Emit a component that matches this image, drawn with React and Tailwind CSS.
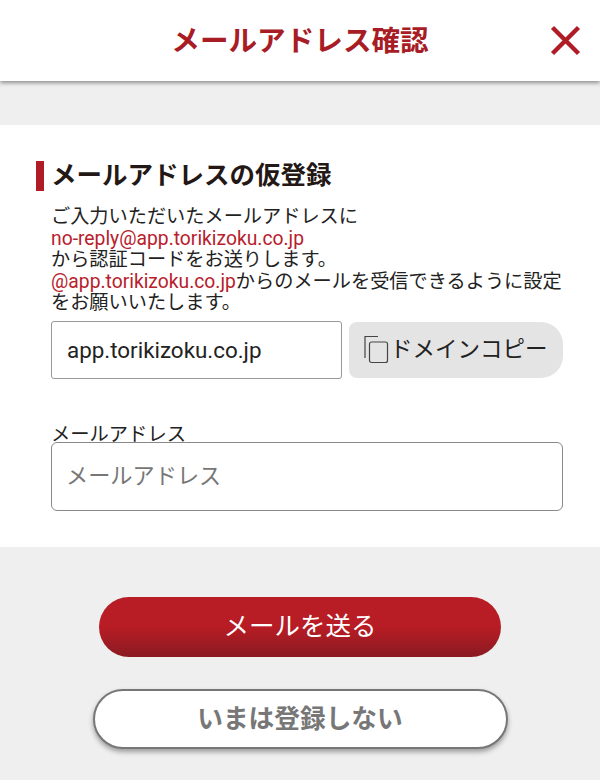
const JP = "font-['Roboto','Noto_Sans_CJK_JP',sans-serif]";

const CopyIcon = () => (
  <svg width="26" height="30" viewBox="0 0 26 30" fill="none" stroke="#444" strokeWidth="1.2" className="shrink-0">
    <path d="M1 23V1.5H14" />
    <rect x="5.5" y="7" width="18" height="20.5" rx="2" />
  </svg>
);

export default function App() {
  return (
    <div className={`${JP} w-[600px] h-[780px] overflow-hidden bg-[#efefef] flex flex-col`}>
      <header className="relative h-[81px] shrink-0 bg-white shadow-[0_2px_4px_rgba(0,0,0,0.4)] flex items-center justify-center">
        <h1 className="pt-[2px] text-[28.6px] leading-none font-bold text-[#a81c25]">メールアドレス確認</h1>
        <button className="absolute left-[549px] top-[24px]">
          <svg width="33" height="33" viewBox="0 0 33 33" fill="none" stroke="#b01c26" strokeWidth="4.4" className="block">
            <path d="M3.5 3.5L29.5 29.5M29.5 3.5L3.5 29.5" />
          </svg>
        </button>
      </header>

      <main className="mt-[44px] h-[422px] shrink-0 bg-white pt-[36px] pl-[36px] pr-[37px]">
        <h2 className="flex items-center h-[30px] text-[25.5px] leading-none font-bold text-[#231815]">
          <span className="w-[8px] h-[30px] bg-[#b01c26] mr-[7px]"></span>
          メールアドレスの仮登録
        </h2>
        <div className="pl-[15px]">
          <p className="mt-[15px] text-[19.2px] leading-[21.5px] text-[#222]">
            ご入力いただいたメールアドレスに<br />
            <span className="text-[#b8202c] text-[19.3px] leading-none">no-reply@app.torikizoku.co.jp</span><br />
            から認証コードをお送りします。<br />
            <span className="text-[#b8202c] text-[19.3px] leading-none">@app.torikizoku.co.jp</span>からのメールを受信できるように設定<br />
            をお願いいたします。
          </p>
          <div className="mt-[7px] flex gap-[7px]">
            <input
              readOnly
              value="app.torikizoku.co.jp"
              className="w-[291px] h-[58px] px-[15px] bg-white border border-[#999] rounded-[3px] text-[22.4px] text-[#222] outline-none"
            />
            <button className="w-[214px] h-[56px] mt-px bg-[#e4e4e4] rounded-tr-[22px] rounded-br-[22px] rounded-l-[8px] flex items-center pl-[15px] text-[22.5px] text-[#222] whitespace-nowrap">
              <CopyIcon />
              ドメインコピー
            </button>
          </div>
          <label className="block mt-[45px] text-[19.3px] leading-[22px] text-[#222]">メールアドレス</label>
          <input
            placeholder="メールアドレス"
            className="block w-[512px] h-[69px] -mt-[4px] px-[14px] bg-white border border-[#888] rounded-[6px] text-[22.2px] text-[#222] placeholder:text-[#777] outline-none"
          />
        </div>
      </main>

      <div className="mt-[50px] flex flex-col items-center">
        <button className="w-[402px] h-[60px] rounded-full bg-gradient-to-b from-[#b81c24] from-50% to-[#8a1a22] text-white text-[25.5px] leading-none">
          メールを送る
        </button>
        <button className="mt-[32px] w-[415px] h-[60px] pt-[2px] rounded-full bg-white border-2 border-[#777] shadow-[0_3px_5px_rgba(0,0,0,0.35)] text-[#777] text-[25.7px] leading-none font-bold">
          いまは登録しない
        </button>
      </div>
    </div>
  );
}
